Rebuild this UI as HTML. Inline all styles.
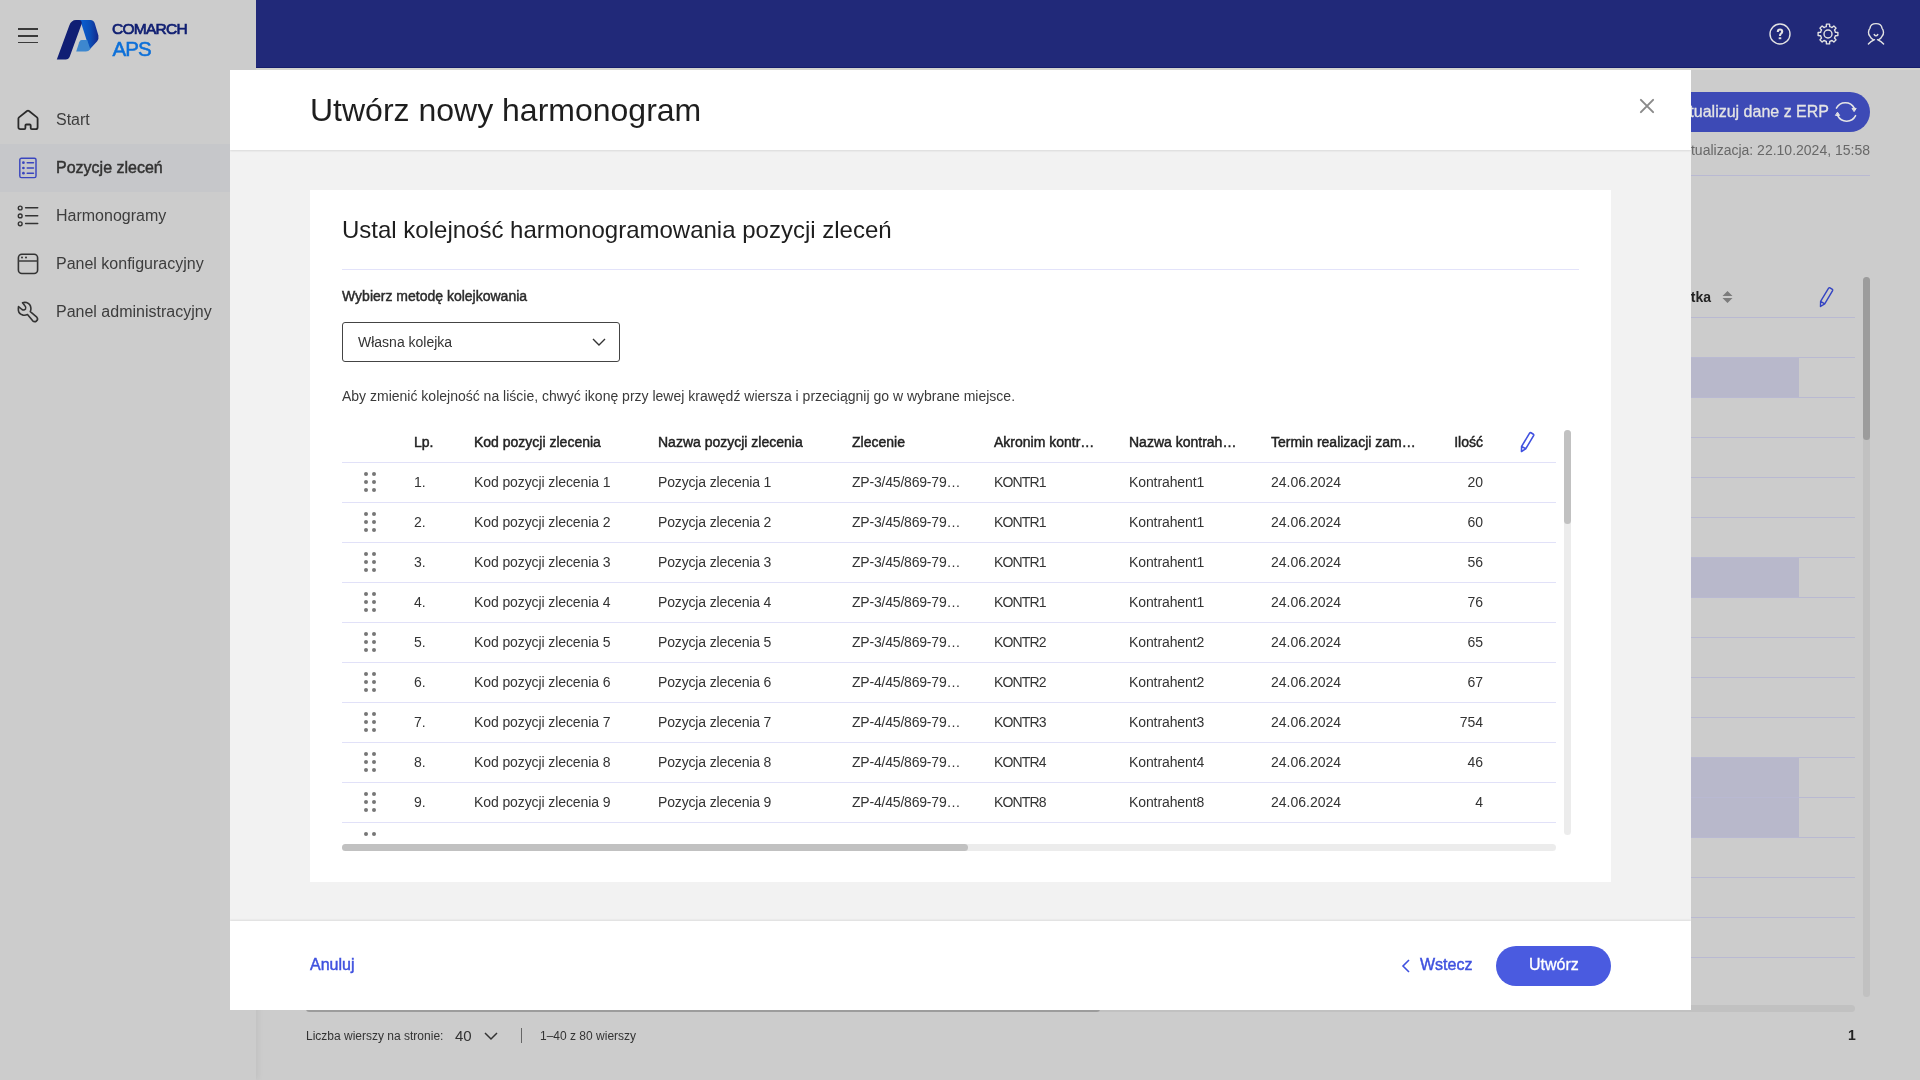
<!DOCTYPE html>
<html><head><meta charset="utf-8">
<style>
*{box-sizing:border-box;margin:0;padding:0}
html,body{width:1920px;height:1080px;overflow:hidden;background:#cccccc;font-family:"Liberation Sans",sans-serif;color:#333}
.a{position:absolute;white-space:nowrap}
#side{position:absolute;left:0;top:0;width:256px;height:1080px;background:#cccccc;box-shadow:2px 0 6px rgba(0,0,0,0.06)}
.nav{position:absolute;left:0;width:230px;height:48px}
.nav .t{position:absolute;left:56px;top:0;line-height:48px;font-size:16px;color:#3d3d3d}
.nav svg{position:absolute;left:16px;top:12px}
#hdr{position:absolute;left:256px;top:0;width:1664px;height:68px;background:#212979;border-bottom:1px solid #151d6c}
#hdrline{position:absolute;left:256px;top:68px;width:1664px;height:2px;background:#d4d4cf}
/* background page */
.bgl{position:absolute;height:1px;background:#b9b9d2}
/* modal */
#modal{position:absolute;left:230px;top:70px;width:1461px;height:940px;background:#f2f2f2;overflow:hidden}
#mhead{position:absolute;left:0;top:0;width:1461px;height:80px;background:#fff;box-shadow:0 1px 2px rgba(0,0,0,0.10);z-index:2}
#mfoot{position:absolute;left:0;top:851px;width:1461px;height:89px;background:#fff;box-shadow:0 -1px 2px rgba(0,0,0,0.09);z-index:2}
#card{position:absolute;left:80px;top:120px;width:1301px;height:692px;background:#fff}
.hd{font-size:14px;font-weight:400;color:#222;line-height:20px;-webkit-text-stroke:0.45px #222}
.med{-webkit-text-stroke:0.45px currentColor}
.cell{font-size:14px;color:#333;line-height:20px}
.row{position:absolute;left:32px;width:1214px;height:40px;border-bottom:1px solid #e1e1f8}
</style></head>
<body>
<div id="root" style="position:absolute;left:0;top:0;width:1920px;height:1080px;overflow:hidden;will-change:transform">
<div id="side">
  <!-- hamburger -->
  <div class="a" style="left:18px;top:28px;width:20px;height:1.5px;background:#3a3a3a"></div>
  <div class="a" style="left:18px;top:35px;width:20px;height:1.5px;background:#3a3a3a"></div>
  <div class="a" style="left:18px;top:41.5px;width:20px;height:1.5px;background:#3a3a3a"></div>
  <!-- logo -->
  <svg class="a" style="left:56px;top:19px" width="44" height="42" viewBox="0 0 44 42">
    <defs><linearGradient id="lg1" x1="0" y1="0" x2="1" y2="0"><stop offset="0" stop-color="#0a62d6"/><stop offset="0.55" stop-color="#0b4fb8"/><stop offset="1" stop-color="#15278a"/></linearGradient></defs>
    <path d="M23 1 L34.5 1 Q37.7 1 38.8 4.5 L42.4 16.5 Q43 20 41.2 22.2 L33.6 30.4 L25.6 5.4 Z" fill="url(#lg1)"/>
    <path d="M25.6 21 L31.2 21 L34.3 30.3 Q32.5 32.6 29.8 32.6 L20.2 32.6 L23.2 23.3 Q24 21 25.6 21 Z" fill="#3d87cf"/>
    <path d="M0.8 40.6 L13.3 6.5 Q15.3 1 20 1 L23 1 Q26.3 1.3 25.6 5 L13.8 37.6 Q12.7 40.6 9.6 40.6 Z" fill="#101e74"/>
  </svg>
  <div class="a" style="left:112px;top:20px;font-size:15.5px;color:#101f72;line-height:18px;letter-spacing:-0.75px;-webkit-text-stroke:0.7px #101f72">COMARCH</div>
  <div class="a" style="left:112.5px;top:38.2px;font-size:20.5px;color:#0d70d9;line-height:22px;letter-spacing:-0.9px;-webkit-text-stroke:0.55px #0d70d9">APS</div>

  <div class="nav" style="top:96px">
    <svg width="24" height="24" viewBox="0 0 24 24" fill="none" stroke="#2a2a2a" stroke-width="1.8" stroke-linejoin="round"><path d="M2.4 10.8 Q2.4 10 3 9.4 L11 3 Q12 2.3 13 3 L21 9.4 Q21.6 10 21.6 10.8 V19.2 Q21.6 21.2 19.6 21.2 H15.8 Q14.7 21.2 14.7 20 V17.5 Q14.7 16.5 13.7 16.5 H10.4 Q9.4 16.5 9.4 17.5 V20 Q9.4 21.2 8.3 21.2 H4.4 Q2.4 21.2 2.4 19.2 Z"/></svg>
    <div class="t">Start</div>
  </div>
  <div class="nav" style="top:144px;background:#c6c7ca">
    <svg width="24" height="24" viewBox="0 0 24 24" fill="none" stroke="#3a46bf" stroke-width="1.45" stroke-linecap="round"><rect x="3.8" y="2.2" width="16.2" height="19.4" rx="1.6"/><path d="M11.2 6.7H17.5M11.2 12H17.5M11.2 17.2H17.5"/><circle cx="7.4" cy="6.7" r="1.35" fill="#3a46bf" stroke="none"/><circle cx="7.4" cy="12" r="1.35" fill="#3a46bf" stroke="none"/><circle cx="7.4" cy="17.2" r="1.35" fill="#3a46bf" stroke="none"/></svg>
    <div class="t med" style="color:#333">Pozycje zleceń</div>
  </div>
  <div class="nav" style="top:192px">
    <svg width="24" height="24" viewBox="0 0 24 24" fill="none" stroke="#333" stroke-width="1.4" stroke-linecap="round"><circle cx="4.2" cy="4" r="1.9"/><circle cx="4.2" cy="11.9" r="1.9"/><circle cx="4.2" cy="19.8" r="1.9"/><path d="M9.6 3.7H21.7M9.6 11.7H21.7M9.6 19.6H21.7" stroke-width="1.5"/></svg>
    <div class="t">Harmonogramy</div>
  </div>
  <div class="nav" style="top:240px">
    <svg width="24" height="24" viewBox="0 0 24 24" fill="none" stroke="#333" stroke-width="1.6"><rect x="2.4" y="2.3" width="19.2" height="19.2" rx="3.5"/><path d="M2.4 9H21.6" stroke="#444"/><circle cx="6" cy="5.5" r="1" fill="#333" stroke="none"/><circle cx="10" cy="5.5" r="1" fill="#333" stroke="none"/></svg>
    <div class="t">Panel konfiguracyjny</div>
  </div>
  <div class="nav" style="top:288px">
    <svg width="24" height="24" viewBox="0 0 24 24" fill="none" stroke="#333" stroke-width="1.6" stroke-linejoin="round"><path d="M6.5 2.8 Q8.5 2 10.5 2.6 Q14.5 4 14.9 8.2 Q15 10.3 14.3 11.7 L20.8 17.2 Q22.5 19 20.5 21 Q18.5 22.5 16.7 20.8 L11.5 14.6 Q9.5 15.4 7.1 15.1 Q2.8 14 2.4 10.4 Q2.2 8.3 2.5 6.6 L6 9.5 Q8 10.7 9.5 9 Q10.5 7.5 8.9 5.8 Z"/></svg>
    <div class="t">Panel administracyjny</div>
  </div>
</div>

<div id="hdr">
  <svg class="a" style="left:1512px;top:22px" width="24" height="24" viewBox="0 0 24 24" fill="none" stroke="#e3e3e3" stroke-width="1.4"><circle cx="12" cy="12" r="10"/><path d="M9.8 9.9 Q9.8 7.5 12 7.5 Q14.2 7.5 14.2 9.6 Q14.2 10.9 13 11.6 Q12 12.2 12 13.9" stroke-width="2.1"/><rect x="10.7" y="15.3" width="2.6" height="1.9" fill="#e3e3e3" stroke="none"/></svg>
  <svg class="a" style="left:1560px;top:22px" width="24" height="24" viewBox="0 0 24 24" fill="none" stroke="#e3e3e3" stroke-width="1.4" stroke-linejoin="round"><path d="M10.29 4.59 L10.44 2.12 L13.56 2.12 L13.71 4.59 A7.6 7.6 0 0 1 16.03 5.55 L17.88 3.91 L20.09 6.12 L18.45 7.97 A7.6 7.6 0 0 1 19.41 10.29 L21.88 10.44 L21.88 13.56 L19.41 13.71 A7.6 7.6 0 0 1 18.45 16.03 L20.09 17.88 L17.88 20.09 L16.03 18.45 A7.6 7.6 0 0 1 13.71 19.41 L13.56 21.88 L10.44 21.88 L10.29 19.41 A7.6 7.6 0 0 1 7.97 18.45 L6.12 20.09 L3.91 17.88 L5.55 16.03 A7.6 7.6 0 0 1 4.59 13.71 L2.12 13.56 L2.12 10.44 L4.59 10.29 A7.6 7.6 0 0 1 5.55 7.97 L3.91 6.12 L6.12 3.91 L7.97 5.55 A7.6 7.6 0 0 1 10.29 4.59 Z"/><circle cx="12" cy="12" r="4"/></svg>
  <svg class="a" style="left:1608px;top:22px" width="24" height="24" viewBox="0 0 24 24" fill="none" stroke="#e3e3e3" stroke-width="1.4" stroke-linecap="round" stroke-linejoin="round"><path d="M9.2 17.6 Q6.8 16.2 6.3 14.7 Q4.3 12.8 4.5 10.2 Q4.7 7.8 5.9 6.4 Q6.6 1.6 12 1.6 Q17.4 1.6 18.1 6.4 Q19.3 7.8 19.5 10.2 Q19.7 12.8 17.7 14.7 Q17.2 16.2 14.8 17.6"/><path d="M10.2 12.5 Q12 15.3 13.8 12.5"/><path d="M10.5 17.7 Q6.5 19.5 4.4 22 M13.5 17.7 Q17.5 19.5 19.6 22"/></svg>
</div>
<div id="hdrline"></div>

<!-- background page visible parts -->
<div class="a" style="left:1560px;top:92px;width:310px;height:40px;border-radius:20px;background:#3d4ab6"></div>
<div class="a" style="left:1560px;top:101px;width:269px;text-align:right;font-size:16px;color:#e4e4e4;line-height:22px;-webkit-text-stroke:0.3px #e4e4e4">Aktualizuj dane z ERP</div>
<svg class="a" style="left:1834px;top:100px" width="24" height="24" viewBox="0 0 24 24" fill="none" stroke="#e6e6e6" stroke-width="1.5" stroke-linecap="round"><path d="M2.4 8.2 A10 10 0 0 1 20.3 8.2"/><path d="M21.6 15.6 A10 10 0 0 1 3.7 15.6"/><path d="M18.4 8.4 L22.2 8.4 L20.3 11.3 Z M1.8 15.4 L5.6 15.4 L3.7 12.5 Z" fill="#e6e6e6" stroke-linejoin="round" stroke-width="1"/></svg>
<div class="a" style="left:1600px;top:140px;width:270px;text-align:right;font-size:14px;color:#686868;line-height:20px">Ostatnia aktualizacja: 22.10.2024, 15:58</div>
<div class="bgl" style="left:1691px;top:175px;width:179px"></div>
<div class="a hd" style="left:1560px;top:287px;width:151px;text-align:right;font-weight:700;-webkit-text-stroke:0;color:#222">Ulica i notatka</div>
<svg class="a" style="left:1722px;top:290px" width="11" height="14" viewBox="0 0 11 14"><path d="M5.5 1 L10.5 6 H0.5 Z M5.5 13 L10.5 8 H0.5 Z" fill="#7c7c7c"/></svg>
<svg class="a" style="left:1818px;top:285px" width="18" height="24" viewBox="0 0 18 22" fill="none" stroke="#3343c2" stroke-width="1.4" stroke-linejoin="round"><path d="M2.5 20.5 L2.6 15.4 L10.6 2.2 Q11.2 1.4 12 1.8 L14.4 3.3 Q15 3.8 14.6 4.6 L6.7 17.8 Z M2.6 15.4 L6.7 17.8"/></svg>
<div class="bgl" style="left:1691px;top:317px;width:164px"></div>
<div class="bgl" style="left:1691px;top:357px;width:164px"></div>
<div class="bgl" style="left:1691px;top:397px;width:164px"></div>
<div class="bgl" style="left:1691px;top:437px;width:164px"></div>
<div class="bgl" style="left:1691px;top:477px;width:164px"></div>
<div class="bgl" style="left:1691px;top:517px;width:164px"></div>
<div class="bgl" style="left:1691px;top:557px;width:164px"></div>
<div class="bgl" style="left:1691px;top:597px;width:164px"></div>
<div class="bgl" style="left:1691px;top:637px;width:164px"></div>
<div class="bgl" style="left:1691px;top:677px;width:164px"></div>
<div class="bgl" style="left:1691px;top:717px;width:164px"></div>
<div class="bgl" style="left:1691px;top:757px;width:164px"></div>
<div class="bgl" style="left:1691px;top:797px;width:164px"></div>
<div class="bgl" style="left:1691px;top:837px;width:164px"></div>
<div class="bgl" style="left:1691px;top:877px;width:164px"></div>
<div class="bgl" style="left:1691px;top:917px;width:164px"></div>
<div class="bgl" style="left:1691px;top:957px;width:164px"></div>
<div class="a" style="left:1691px;top:358px;width:108px;height:39px;background:#b8b8cb"></div>
<div class="a" style="left:1691px;top:558px;width:108px;height:39px;background:#b8b8cb"></div>
<div class="a" style="left:1691px;top:758px;width:108px;height:39px;background:#b8b8cb"></div>
<div class="a" style="left:1691px;top:798px;width:108px;height:39px;background:#b8b8cb"></div>
<div class="a" style="left:1863px;top:277px;width:7px;height:720px;border-radius:3.5px;background:#c1c1c1"></div>
<div class="a" style="left:1863px;top:277px;width:7px;height:163px;border-radius:3.5px;background:#9c9c9c"></div>
<div class="a" style="left:306px;top:1005px;width:1549px;height:7px;border-radius:3.5px;background:#c1c1c1"></div>
<div class="a" style="left:306px;top:1005px;width:794px;height:7px;border-radius:3.5px;background:#9c9c9c"></div>

<div id="modal">
  <div id="mhead">
    <div class="a" style="left:80px;top:20px;font-size:32px;color:#1e1e1e;line-height:40px">Utwórz nowy harmonogram</div>
    <svg class="a" style="left:1409px;top:28px" width="16" height="16" viewBox="0 0 16 16" stroke="#8a8a8a" stroke-width="2" stroke-linecap="round"><path d="M1.9 1.9 L14.1 14.1 M14.1 1.9 L1.9 14.1"/></svg>
  </div>
  <div id="card">
    <div class="a" style="left:32px;top:24px;font-size:24px;color:#1e1e1e;line-height:32px">Ustal kolejność harmonogramowania pozycji zleceń</div>
    <div class="a" style="left:32px;top:79px;width:1237px;height:1px;background:#e3e3fa"></div>
    <div class="a hd" style="left:32px;top:96px;color:#2b2b2b;-webkit-text-stroke-color:#2b2b2b">Wybierz metodę kolejkowania</div>
    <div class="a" style="left:32px;top:132px;width:278px;height:40px;border:1px solid #444;border-radius:3px">
      <div class="a cell" style="left:15px;top:9px">Własna kolejka</div>
      <svg class="a" style="left:249px;top:14px" width="14" height="10" viewBox="0 0 14 10" fill="none" stroke="#333" stroke-width="1.4"><path d="M1 2 L7 8 L13 2"/></svg>
    </div>
    <div class="a cell" style="left:32px;top:196px;color:#3a3a3a">Aby zmienić kolejność na liście, chwyć ikonę przy lewej krawędź wiersza i przeciągnij go w wybrane miejsce.</div>
    <div class="a" style="left:32px;top:232px;width:1214px;height:415px;overflow:hidden">
<div class="a hd" style="left:72px;top:10px;letter-spacing:0px">Lp.</div>
<div class="a hd" style="left:132px;top:10px;letter-spacing:0px">Kod pozycji zlecenia</div>
<div class="a hd" style="left:316px;top:10px;letter-spacing:0px">Nazwa pozycji zlecenia</div>
<div class="a hd" style="left:510px;top:10px;letter-spacing:0px">Zlecenie</div>
<div class="a hd" style="left:652px;top:10px;letter-spacing:0px">Akronim kontr…</div>
<div class="a hd" style="left:787px;top:10px;letter-spacing:0px">Nazwa kontrah…</div>
<div class="a hd" style="left:929px;top:10px;letter-spacing:0px">Termin realizacji zam…</div>
<div class="a hd" style="left:1058px;top:10px;width:83px;text-align:right">Ilość</div>
<svg class="a" style="left:1177px;top:9px" width="18" height="22" viewBox="0 0 18 22" fill="none" stroke="#4051e0" stroke-width="1.6" stroke-linejoin="round"><path d="M2.5 20.5 L2.6 15.4 L10.6 2.2 Q11.2 1.4 12 1.8 L14.4 3.3 Q15 3.8 14.6 4.6 L6.7 17.8 Z M2.6 15.4 L6.7 17.8"/></svg>
<div class="a" style="left:0;top:40px;width:1214px;height:1px;background:#e1e1f8"></div>
<svg class="a" style="left:20px;top:48px" width="16" height="24" viewBox="0 0 16 24"><circle cx="4" cy="4" r="2" fill="#767676"/><circle cx="4" cy="12" r="2" fill="#767676"/><circle cx="4" cy="20" r="2" fill="#767676"/><circle cx="12" cy="4" r="2" fill="#767676"/><circle cx="12" cy="12" r="2" fill="#767676"/><circle cx="12" cy="20" r="2" fill="#767676"/></svg>
<div class="a cell" style="left:72px;top:50px;letter-spacing:0px">1.</div>
<div class="a cell" style="left:132px;top:50px;letter-spacing:-0.1px">Kod pozycji zlecenia 1</div>
<div class="a cell" style="left:316px;top:50px;letter-spacing:-0.15px">Pozycja zlecenia 1</div>
<div class="a cell" style="left:510px;top:50px;letter-spacing:-0.2px">ZP-3/45/869-79…</div>
<div class="a cell" style="left:652px;top:50px;letter-spacing:-0.85px">KONTR1</div>
<div class="a cell" style="left:787px;top:50px;letter-spacing:-0.1px">Kontrahent1</div>
<div class="a cell" style="left:929px;top:50px;letter-spacing:0px">24.06.2024</div>
<div class="a cell" style="left:1058px;top:50px;width:83px;text-align:right">20</div>
<div class="a" style="left:0;top:80px;width:1214px;height:1px;background:#e1e1f8"></div>
<svg class="a" style="left:20px;top:88px" width="16" height="24" viewBox="0 0 16 24"><circle cx="4" cy="4" r="2" fill="#767676"/><circle cx="4" cy="12" r="2" fill="#767676"/><circle cx="4" cy="20" r="2" fill="#767676"/><circle cx="12" cy="4" r="2" fill="#767676"/><circle cx="12" cy="12" r="2" fill="#767676"/><circle cx="12" cy="20" r="2" fill="#767676"/></svg>
<div class="a cell" style="left:72px;top:90px;letter-spacing:0px">2.</div>
<div class="a cell" style="left:132px;top:90px;letter-spacing:-0.1px">Kod pozycji zlecenia 2</div>
<div class="a cell" style="left:316px;top:90px;letter-spacing:-0.15px">Pozycja zlecenia 2</div>
<div class="a cell" style="left:510px;top:90px;letter-spacing:-0.2px">ZP-3/45/869-79…</div>
<div class="a cell" style="left:652px;top:90px;letter-spacing:-0.85px">KONTR1</div>
<div class="a cell" style="left:787px;top:90px;letter-spacing:-0.1px">Kontrahent1</div>
<div class="a cell" style="left:929px;top:90px;letter-spacing:0px">24.06.2024</div>
<div class="a cell" style="left:1058px;top:90px;width:83px;text-align:right">60</div>
<div class="a" style="left:0;top:120px;width:1214px;height:1px;background:#e1e1f8"></div>
<svg class="a" style="left:20px;top:128px" width="16" height="24" viewBox="0 0 16 24"><circle cx="4" cy="4" r="2" fill="#767676"/><circle cx="4" cy="12" r="2" fill="#767676"/><circle cx="4" cy="20" r="2" fill="#767676"/><circle cx="12" cy="4" r="2" fill="#767676"/><circle cx="12" cy="12" r="2" fill="#767676"/><circle cx="12" cy="20" r="2" fill="#767676"/></svg>
<div class="a cell" style="left:72px;top:130px;letter-spacing:0px">3.</div>
<div class="a cell" style="left:132px;top:130px;letter-spacing:-0.1px">Kod pozycji zlecenia 3</div>
<div class="a cell" style="left:316px;top:130px;letter-spacing:-0.15px">Pozycja zlecenia 3</div>
<div class="a cell" style="left:510px;top:130px;letter-spacing:-0.2px">ZP-3/45/869-79…</div>
<div class="a cell" style="left:652px;top:130px;letter-spacing:-0.85px">KONTR1</div>
<div class="a cell" style="left:787px;top:130px;letter-spacing:-0.1px">Kontrahent1</div>
<div class="a cell" style="left:929px;top:130px;letter-spacing:0px">24.06.2024</div>
<div class="a cell" style="left:1058px;top:130px;width:83px;text-align:right">56</div>
<div class="a" style="left:0;top:160px;width:1214px;height:1px;background:#e1e1f8"></div>
<svg class="a" style="left:20px;top:168px" width="16" height="24" viewBox="0 0 16 24"><circle cx="4" cy="4" r="2" fill="#767676"/><circle cx="4" cy="12" r="2" fill="#767676"/><circle cx="4" cy="20" r="2" fill="#767676"/><circle cx="12" cy="4" r="2" fill="#767676"/><circle cx="12" cy="12" r="2" fill="#767676"/><circle cx="12" cy="20" r="2" fill="#767676"/></svg>
<div class="a cell" style="left:72px;top:170px;letter-spacing:0px">4.</div>
<div class="a cell" style="left:132px;top:170px;letter-spacing:-0.1px">Kod pozycji zlecenia 4</div>
<div class="a cell" style="left:316px;top:170px;letter-spacing:-0.15px">Pozycja zlecenia 4</div>
<div class="a cell" style="left:510px;top:170px;letter-spacing:-0.2px">ZP-3/45/869-79…</div>
<div class="a cell" style="left:652px;top:170px;letter-spacing:-0.85px">KONTR1</div>
<div class="a cell" style="left:787px;top:170px;letter-spacing:-0.1px">Kontrahent1</div>
<div class="a cell" style="left:929px;top:170px;letter-spacing:0px">24.06.2024</div>
<div class="a cell" style="left:1058px;top:170px;width:83px;text-align:right">76</div>
<div class="a" style="left:0;top:200px;width:1214px;height:1px;background:#e1e1f8"></div>
<svg class="a" style="left:20px;top:208px" width="16" height="24" viewBox="0 0 16 24"><circle cx="4" cy="4" r="2" fill="#767676"/><circle cx="4" cy="12" r="2" fill="#767676"/><circle cx="4" cy="20" r="2" fill="#767676"/><circle cx="12" cy="4" r="2" fill="#767676"/><circle cx="12" cy="12" r="2" fill="#767676"/><circle cx="12" cy="20" r="2" fill="#767676"/></svg>
<div class="a cell" style="left:72px;top:210px;letter-spacing:0px">5.</div>
<div class="a cell" style="left:132px;top:210px;letter-spacing:-0.1px">Kod pozycji zlecenia 5</div>
<div class="a cell" style="left:316px;top:210px;letter-spacing:-0.15px">Pozycja zlecenia 5</div>
<div class="a cell" style="left:510px;top:210px;letter-spacing:-0.2px">ZP-3/45/869-79…</div>
<div class="a cell" style="left:652px;top:210px;letter-spacing:-0.85px">KONTR2</div>
<div class="a cell" style="left:787px;top:210px;letter-spacing:-0.1px">Kontrahent2</div>
<div class="a cell" style="left:929px;top:210px;letter-spacing:0px">24.06.2024</div>
<div class="a cell" style="left:1058px;top:210px;width:83px;text-align:right">65</div>
<div class="a" style="left:0;top:240px;width:1214px;height:1px;background:#e1e1f8"></div>
<svg class="a" style="left:20px;top:248px" width="16" height="24" viewBox="0 0 16 24"><circle cx="4" cy="4" r="2" fill="#767676"/><circle cx="4" cy="12" r="2" fill="#767676"/><circle cx="4" cy="20" r="2" fill="#767676"/><circle cx="12" cy="4" r="2" fill="#767676"/><circle cx="12" cy="12" r="2" fill="#767676"/><circle cx="12" cy="20" r="2" fill="#767676"/></svg>
<div class="a cell" style="left:72px;top:250px;letter-spacing:0px">6.</div>
<div class="a cell" style="left:132px;top:250px;letter-spacing:-0.1px">Kod pozycji zlecenia 6</div>
<div class="a cell" style="left:316px;top:250px;letter-spacing:-0.15px">Pozycja zlecenia 6</div>
<div class="a cell" style="left:510px;top:250px;letter-spacing:-0.2px">ZP-4/45/869-79…</div>
<div class="a cell" style="left:652px;top:250px;letter-spacing:-0.85px">KONTR2</div>
<div class="a cell" style="left:787px;top:250px;letter-spacing:-0.1px">Kontrahent2</div>
<div class="a cell" style="left:929px;top:250px;letter-spacing:0px">24.06.2024</div>
<div class="a cell" style="left:1058px;top:250px;width:83px;text-align:right">67</div>
<div class="a" style="left:0;top:280px;width:1214px;height:1px;background:#e1e1f8"></div>
<svg class="a" style="left:20px;top:288px" width="16" height="24" viewBox="0 0 16 24"><circle cx="4" cy="4" r="2" fill="#767676"/><circle cx="4" cy="12" r="2" fill="#767676"/><circle cx="4" cy="20" r="2" fill="#767676"/><circle cx="12" cy="4" r="2" fill="#767676"/><circle cx="12" cy="12" r="2" fill="#767676"/><circle cx="12" cy="20" r="2" fill="#767676"/></svg>
<div class="a cell" style="left:72px;top:290px;letter-spacing:0px">7.</div>
<div class="a cell" style="left:132px;top:290px;letter-spacing:-0.1px">Kod pozycji zlecenia 7</div>
<div class="a cell" style="left:316px;top:290px;letter-spacing:-0.15px">Pozycja zlecenia 7</div>
<div class="a cell" style="left:510px;top:290px;letter-spacing:-0.2px">ZP-4/45/869-79…</div>
<div class="a cell" style="left:652px;top:290px;letter-spacing:-0.85px">KONTR3</div>
<div class="a cell" style="left:787px;top:290px;letter-spacing:-0.1px">Kontrahent3</div>
<div class="a cell" style="left:929px;top:290px;letter-spacing:0px">24.06.2024</div>
<div class="a cell" style="left:1058px;top:290px;width:83px;text-align:right">754</div>
<div class="a" style="left:0;top:320px;width:1214px;height:1px;background:#e1e1f8"></div>
<svg class="a" style="left:20px;top:328px" width="16" height="24" viewBox="0 0 16 24"><circle cx="4" cy="4" r="2" fill="#767676"/><circle cx="4" cy="12" r="2" fill="#767676"/><circle cx="4" cy="20" r="2" fill="#767676"/><circle cx="12" cy="4" r="2" fill="#767676"/><circle cx="12" cy="12" r="2" fill="#767676"/><circle cx="12" cy="20" r="2" fill="#767676"/></svg>
<div class="a cell" style="left:72px;top:330px;letter-spacing:0px">8.</div>
<div class="a cell" style="left:132px;top:330px;letter-spacing:-0.1px">Kod pozycji zlecenia 8</div>
<div class="a cell" style="left:316px;top:330px;letter-spacing:-0.15px">Pozycja zlecenia 8</div>
<div class="a cell" style="left:510px;top:330px;letter-spacing:-0.2px">ZP-4/45/869-79…</div>
<div class="a cell" style="left:652px;top:330px;letter-spacing:-0.85px">KONTR4</div>
<div class="a cell" style="left:787px;top:330px;letter-spacing:-0.1px">Kontrahent4</div>
<div class="a cell" style="left:929px;top:330px;letter-spacing:0px">24.06.2024</div>
<div class="a cell" style="left:1058px;top:330px;width:83px;text-align:right">46</div>
<div class="a" style="left:0;top:360px;width:1214px;height:1px;background:#e1e1f8"></div>
<svg class="a" style="left:20px;top:368px" width="16" height="24" viewBox="0 0 16 24"><circle cx="4" cy="4" r="2" fill="#767676"/><circle cx="4" cy="12" r="2" fill="#767676"/><circle cx="4" cy="20" r="2" fill="#767676"/><circle cx="12" cy="4" r="2" fill="#767676"/><circle cx="12" cy="12" r="2" fill="#767676"/><circle cx="12" cy="20" r="2" fill="#767676"/></svg>
<div class="a cell" style="left:72px;top:370px;letter-spacing:0px">9.</div>
<div class="a cell" style="left:132px;top:370px;letter-spacing:-0.1px">Kod pozycji zlecenia 9</div>
<div class="a cell" style="left:316px;top:370px;letter-spacing:-0.15px">Pozycja zlecenia 9</div>
<div class="a cell" style="left:510px;top:370px;letter-spacing:-0.2px">ZP-4/45/869-79…</div>
<div class="a cell" style="left:652px;top:370px;letter-spacing:-0.85px">KONTR8</div>
<div class="a cell" style="left:787px;top:370px;letter-spacing:-0.1px">Kontrahent8</div>
<div class="a cell" style="left:929px;top:370px;letter-spacing:0px">24.06.2024</div>
<div class="a cell" style="left:1058px;top:370px;width:83px;text-align:right">4</div>
<div class="a" style="left:0;top:400px;width:1214px;height:1px;background:#e1e1f8"></div>
<svg class="a" style="left:20px;top:408px" width="16" height="24" viewBox="0 0 16 24"><circle cx="4" cy="4" r="2" fill="#767676"/><circle cx="4" cy="12" r="2" fill="#767676"/><circle cx="4" cy="20" r="2" fill="#767676"/><circle cx="12" cy="4" r="2" fill="#767676"/><circle cx="12" cy="12" r="2" fill="#767676"/><circle cx="12" cy="20" r="2" fill="#767676"/></svg>
</div>
<div class="a" style="left:1254px;top:240px;width:7px;height:405px;border-radius:3.5px;background:#ececec"></div>
<div class="a" style="left:1254px;top:240px;width:7px;height:94px;border-radius:3.5px;background:#c1c1c1"></div>
<div class="a" style="left:32px;top:654px;width:1214px;height:7px;border-radius:3.5px;background:#ececec"></div>
<div class="a" style="left:32px;top:654px;width:626px;height:7px;border-radius:3.5px;background:#c1c1c1"></div>
  </div>
  <div id="mfoot">
    <div class="a" style="left:80px;top:34px;font-size:16px;color:#3f51df;line-height:20px;-webkit-text-stroke:0.45px #3f51df">Anuluj</div>
    <svg class="a" style="left:1171px;top:37px" width="10" height="16" viewBox="0 0 10 16" fill="none" stroke="#3f51df" stroke-width="1.6"><path d="M8 2 L2 8 L8 14"/></svg>
    <div class="a" style="left:1190px;top:34px;font-size:16px;color:#3f51df;line-height:20px;-webkit-text-stroke:0.45px #3f51df">Wstecz</div>
    <div class="a" style="left:1266px;top:25px;width:115px;height:40px;border-radius:20px;background:#4a5be0"></div>
    <div class="a" style="left:1299px;top:34px;font-size:16px;color:#fff;line-height:20px;-webkit-text-stroke:0.3px #fff">Utwórz</div>
  </div>
</div>

<!-- bottom pagination of background -->
<div class="a" style="left:306px;top:1026px;font-size:12px;color:#333;line-height:20px">Liczba wierszy na stronie:</div>
<div class="a" style="left:455px;top:1026px;font-size:15px;color:#333;line-height:20px">40</div>
<svg class="a" style="left:484px;top:1031px" width="14" height="10" viewBox="0 0 14 10" fill="none" stroke="#333" stroke-width="1.5"><path d="M1 2 L7 8 L13 2"/></svg>
<div class="a" style="left:520.5px;top:1028px;width:1px;height:15px;background:#666"></div>
<div class="a" style="left:540px;top:1026px;font-size:12px;color:#333;line-height:20px">1–40 z 80 wierszy</div>
<div class="a" style="left:1848px;top:1025px;font-size:14px;font-weight:700;color:#222;line-height:20px">1</div>
</div>
</body></html>
